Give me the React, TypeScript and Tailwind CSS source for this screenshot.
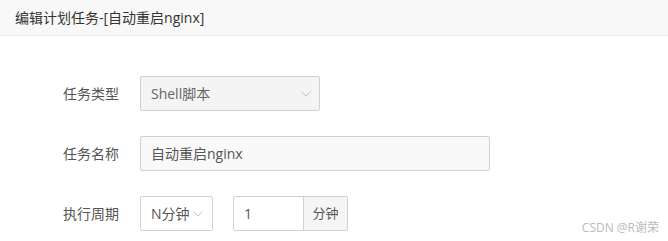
const font = {
  fontFamily: '"Open Sans", "Noto Sans CJK SC", sans-serif',
};

function Caret() {
  return (
    <svg width="10" height="6" viewBox="0 0 10 6" className="shrink-0">
      <polyline
        points="0.5,0.5 5,5 9.5,0.5"
        fill="none"
        stroke="#c4c4c4"
        strokeWidth="1"
      />
    </svg>
  );
}

function FieldRow({
  label,
  children,
}: {
  label: string;
  children: React.ReactNode;
}) {
  return (
    <div className="flex items-center">
      <label className="w-[119px] text-right text-[14px] text-[#555]">
        {label}
      </label>
      <div className="ml-[21px] flex items-center">{children}</div>
    </div>
  );
}

export default function App() {
  return (
    <div
      className="relative h-[241px] w-[668px] overflow-hidden bg-white"
      style={font}
    >
      <div className="flex h-[36px] items-center border-b border-[#ececec] bg-[#f8f8f8] px-[15px] text-[14px] text-[#333]">
        编辑计划任务-[自动重启nginx]
      </div>

      <div className="flex flex-col gap-[25px] pt-[40px]">
        <FieldRow label="任务类型">
          <div className="flex h-[35px] w-[180px] items-center justify-between rounded-[2px] border border-[#d0d0d0] bg-[#f4f4f4] pl-[10px] pr-[8px] text-[14px] text-[#666]">
            <span>Shell脚本</span>
            <Caret />
          </div>
        </FieldRow>

        <FieldRow label="任务名称">
          <div className="flex h-[35px] w-[350px] items-center rounded-[2px] border border-[#d0d0d0] bg-[#f9f9f9] px-[10px] text-[14px] text-[#555]">
            自动重启nginx
          </div>
        </FieldRow>

        <FieldRow label="执行周期">
          <div className="flex h-[35px] w-[73px] items-center justify-between rounded-[2px] border border-[#d0d0d0] bg-white pl-[10px] pr-[9px] text-[14px] text-[#555]">
            <span>N分钟</span>
            <Caret />
          </div>
          <div className="ml-[20px] flex h-[35px] items-stretch rounded-[2px] border border-[#d0d0d0]">
            <div className="flex w-[69px] items-center px-[10px] text-[14px] text-[#555]">
              1
            </div>
            <div className="flex w-[44px] items-center justify-center border-l border-[#d0d0d0] bg-[#f5f5f5] text-[13px] text-[#555]">
              分钟
            </div>
          </div>
        </FieldRow>
      </div>

      <div className="absolute right-[9px] top-[219px] text-[12px] text-[#bbb]">
        CSDN @R谢荣
      </div>
    </div>
  );
}
